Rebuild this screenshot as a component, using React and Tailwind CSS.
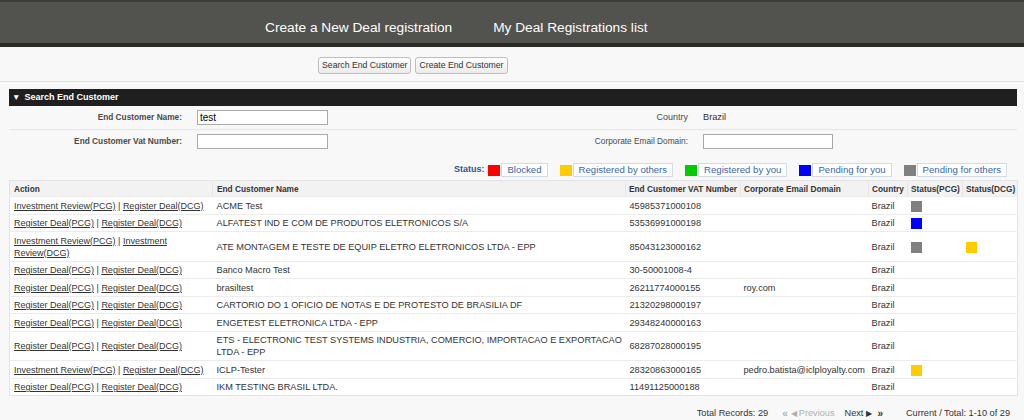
import React from 'react';

const rows = [
  { a: 'ir', name: 'ACME Test', vat: '45985371000108', email: '', pcg: '#808080', dcg: null },
  { a: 'rd', name: 'ALFATEST IND E COM DE PRODUTOS ELETRONICOS S/A', vat: '53536991000198', email: '', pcg: '#0000ff', dcg: null },
  { a: 'irir', name: 'ATE MONTAGEM E TESTE DE EQUIP ELETRO ELETRONICOS LTDA - EPP', vat: '85043123000162', email: '', pcg: '#808080', dcg: '#ffcc00' },
  { a: 'rd', name: 'Banco Macro Test', vat: '30-50001008-4', email: '', pcg: null, dcg: null },
  { a: 'rd', name: 'brasiltest', vat: '26211774000155', email: 'roy.com', pcg: null, dcg: null },
  { a: 'rd', name: 'CARTORIO DO 1 OFICIO DE NOTAS E DE PROTESTO DE BRASILIA DF', vat: '21320298000197', email: '', pcg: null, dcg: null },
  { a: 'rd', name: 'ENGETEST ELETRONICA LTDA - EPP', vat: '29348240000163', email: '', pcg: null, dcg: null },
  { a: 'rd', name: 'ETS - ELECTRONIC TEST SYSTEMS INDUSTRIA, COMERCIO, IMPORTACAO E EXPORTACAO LTDA - EPP', vat: '68287028000195', email: '', pcg: null, dcg: null },
  { a: 'ir', name: 'ICLP-Tester', vat: '28320863000165', email: 'pedro.batista@iclployalty.com', pcg: '#ffcc00', dcg: null },
  { a: 'rd', name: 'IKM TESTING BRASIL LTDA.', vat: '11491125000188', email: '', pcg: null, dcg: null },
];

const legend = [
  { color: '#ff0000', label: 'Blocked' },
  { color: '#ffcc00', label: 'Registered by others' },
  { color: '#00cc00', label: 'Registered by you' },
  { color: '#0000ff', label: 'Pending for you' },
  { color: '#808080', label: 'Pending for others' },
];

function Action({ type }) {
  const first = type === 'rd' ? 'Register Deal(PCG)' : 'Investment Review(PCG)';
  const second = type === 'irir' ? 'Investment Review(DCG)' : 'Register Deal(DCG)';
  return (
    <>
      <a className="underline text-[#333]">{first}</a> | <a className="underline text-[#333]">{second}</a>
    </>
  );
}

function Swatch({ color }) {
  if (!color) return null;
  return <span className="inline-block w-[11px] h-[11px] align-middle" style={{ backgroundColor: color }} />;
}

export default function App() {
  return (
    <div className="w-[1024px] h-[420px] overflow-hidden bg-[#f8f8f8] font-['Liberation_Sans',Arial,sans-serif] text-[#333]">
      {/* top nav */}
      <div className="h-[47px] bg-[#52524e] border-t-2 border-b-4 border-t-[#3c3c39] border-b-[#2a2a28] flex items-center pl-[265px] gap-[41px] pt-[11px] text-white text-[13.7px]">
        <span>Create a New Deal registration</span>
        <span>My Deal Registrations list</span>
      </div>

      <div className="h-[35px] border-b border-[#e2e2e2] flex items-start pt-[10px] pl-[318px] gap-[4px]">
        <button className="h-[17px] px-[3px] border border-[#bdbdbd] rounded-[3px] bg-gradient-to-b from-white to-[#ebebeb] text-[8.7px] text-[#333]">Search End Customer</button>
        <button className="h-[17px] px-[3px] border border-[#bdbdbd] rounded-[3px] bg-gradient-to-b from-white to-[#ebebeb] text-[8.7px] text-[#333]">Create End Customer</button>
      </div>

      <div className="ml-[9px] mr-[7px] mt-[7px]">
        <div className="h-[17px] bg-[#1f1f1f] text-white text-[9px] font-bold flex items-center pl-[3px]">
          <span className="text-[8.5px] mr-[4px]">▼</span>Search End Customer
        </div>

        <div className="h-[24px] border-b border-[#e6e6e6] grid grid-cols-[173px_315px_191px_1fr] items-center">
          <div className="text-right text-[8.3px] font-bold text-[#4a4a4a]">End Customer Name:</div>
          <div className="pl-[15px]"><div className="w-[131px] h-[15px] border border-[#a9a9a9] bg-white text-[10px] leading-[13px] pl-[2px] text-black">test</div></div>
          <div className="text-right text-[9px] text-[#4a4a4a]">Country</div>
          <div className="pl-[15px] text-[9.2px]">Brazil</div>
        </div>
        <div className="h-[23px] grid grid-cols-[173px_315px_191px_1fr] items-center">
          <div className="text-right text-[8.3px] font-bold text-[#4a4a4a]">End Customer Vat Number:</div>
          <div className="pl-[15px]"><div className="w-[131px] h-[15px] border border-[#a9a9a9] bg-white" /></div>
          <div className="text-right text-[8.3px] text-[#4a4a4a]">Corporate Email Domain:</div>
          <div className="pl-[15px]"><div className="w-[130px] h-[15px] border border-[#a9a9a9] bg-white" /></div>
        </div>

        <div className="mt-[10px] h-[14px] flex items-center justify-end pr-[10px]">
          <span className="text-[9px] font-bold text-[#2f5597] mr-[4px]">Status:</span>
          {legend.map((l, i) => (
            <div key={l.label} className={`flex items-center ${i ? 'ml-[12px]' : ''}`}>
              <span className="w-[12px] h-[11px]" style={{ backgroundColor: l.color }} />
              <span className="ml-[1px] h-[14px] px-[5px] border border-[#d3dbe6] bg-white text-[9.6px] leading-[12px] text-[#3b66ab]">{l.label}</span>
            </div>
          ))}
        </div>

        <table className="mt-[3px] w-[1008px] table-fixed border-collapse bg-white border border-[#e3e3e3] text-[9.2px] leading-[12px]">
          <colgroup>
            <col className="w-[203px]" />
            <col className="w-[413px]" />
            <col className="w-[115px]" />
            <col className="w-[128px]" />
            <col className="w-[39px]" />
            <col className="w-[55px]" />
            <col className="w-[55px]" />
          </colgroup>
          <thead>
            <tr className="bg-[#f2f2f2] text-[8.3px] text-[#333] h-[16px] whitespace-nowrap">
              <th className="text-left px-[4px] border-r border-[#e6e6e6] font-bold">Action</th>
              <th className="text-left px-[4px] border-r border-[#e6e6e6] font-bold">End Customer Name</th>
              <th className="text-left px-[3px] border-r border-[#e6e6e6] font-bold overflow-hidden">End Customer VAT Number</th>
              <th className="text-left px-[3px] border-r border-[#e6e6e6] font-bold">Corporate Email Domain</th>
              <th className="text-left px-[3px] border-r border-[#e6e6e6] font-bold">Country</th>
              <th className="text-left px-[3px] border-r border-[#e6e6e6] font-bold">Status(PCG)</th>
              <th className="text-left px-[3px] font-bold">Status(DCG)</th>
            </tr>
          </thead>
          <tbody>
            {rows.map((r) => (
              <tr key={r.name} className="border-t border-[#ececec] align-middle">
                <td className="px-[4px] pt-[2.5px] pb-[2px] text-[9px]"><Action type={r.a} /></td>
                <td className="pl-[4px] pr-[2px] pt-[2.5px] pb-[2px]">{r.name}</td>
                <td className="px-[4px] pt-[2.5px] pb-[2px]">{r.vat}</td>
                <td className="px-[3px] pt-[2.5px] pb-[2px]">{r.email}</td>
                <td className="px-[3px] pt-[2.5px] pb-[2px]">Brazil</td>
                <td className="px-[3px] pt-[2.5px] pb-[2px]"><Swatch color={r.pcg} /></td>
                <td className="px-[3px] pt-[2.5px] pb-[2px]"><Swatch color={r.dcg} /></td>
              </tr>
            ))}
          </tbody>
        </table>

        <div className="mt-[10px] flex items-center justify-end pr-[7px] text-[9.2px]">
          <span>Total Records: 29</span>
          <span className="ml-[14px] text-[#b0b0b0] text-[10px] font-bold">«</span>
          <span className="ml-[3px] text-[#b0b0b0] text-[8px]">◀</span>
          <span className="ml-[2px] text-[#b0b0b0]">Previous</span>
          <span className="ml-[10px]">Next</span>
          <span className="ml-[3px] text-[8px]">▶</span>
          <span className="ml-[5px] text-[10px] font-bold">»</span>
          <span className="ml-[23px]">Current / Total: 1-10 of 29</span>
        </div>
      </div>
    </div>
  );
}
